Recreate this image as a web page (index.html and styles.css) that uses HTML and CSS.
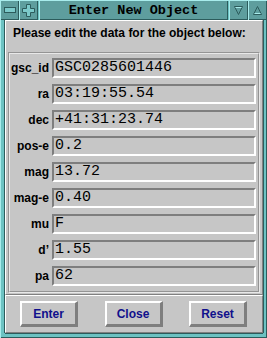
FILE: index.html
```html
<!DOCTYPE html>
<html lang="en">
  <head>
    <meta charset="UTF-8" />
    <title>Enter New Object</title>
    <link rel="stylesheet" href="styles.css">
  </head>
  <body>
    <div class="window">
      <div class="titlebar">
        <div class="tb-btn">
          <svg width="12" height="6" viewBox="0 0 12 6"><rect x="0.5" y="0.5" width="11" height="5" fill="#7ccaca" stroke="#2c5c5c"/></svg>
        </div>
        <div class="tb-btn">
          <svg width="13" height="13" viewBox="0 0 13 13"><path d="M4.5 0.5h4v4h4v4h-4v4h-4v-4h-4v-4h4z" fill="#7ccaca" stroke="#2c5c5c"/></svg>
        </div>
        <div class="tb-title">Enter New Object</div>
        <div class="tb-btn">
          <svg width="9" height="9" viewBox="0 0 9 9"><path d="M0.5 0.5h8l-4 8z" fill="none" stroke="#2c5c5c"/><path d="M1.5 1.5h6" stroke="#a8ecec"/></svg>
        </div>
        <div class="tb-btn">
          <svg width="9" height="9" viewBox="0 0 9 9"><path d="M4.5 0.5l4 8h-8z" fill="none" stroke="#2c5c5c"/><path d="M1.5 7.5h6" stroke="#a8ecec"/></svg>
        </div>
      </div>
      <div class="client">
        <div class="work">
          <p class="prompt">Please edit the data for the object below:</p>
          <div class="form">
            <label class="field-label">gsc_id</label><div class="entry">GSC0285601446</div>
            <label class="field-label">ra</label><div class="entry">03:19:55.54</div>
            <label class="field-label">dec</label><div class="entry">+41:31:23.74</div>
            <label class="field-label">pos-e</label><div class="entry">0.2</div>
            <label class="field-label">mag</label><div class="entry">13.72</div>
            <label class="field-label">mag-e</label><div class="entry">0.40</div>
            <label class="field-label">mu</label><div class="entry">F</div>
            <label class="field-label">d’</label><div class="entry">1.55</div>
            <label class="field-label">pa</label><div class="entry">62</div>
          </div>
        </div>
        <div class="actions">
          <button class="push">Enter</button>
          <button class="push">Close</button>
          <button class="push">Reset</button>
        </div>
      </div>
    </div>
  </body>
</html>
```

FILE: styles.css
```css
* {
  margin: 0;
  padding: 0;
  box-sizing: border-box;
}
body {
  background: #c6c6c6;
  font-family: "Liberation Sans", Arial, sans-serif;
}
.window {
  width: 267px;
  height: 338px;
  display: flex;
  flex-direction: column;
  background: #6cc2c2;
  box-shadow: inset 1px 1px #a8ecec, inset -1px -1px #2c5c5c;
  padding: 0 4px 5px 5px;
}
.titlebar {
  height: 20px;
  display: flex;
  margin: 0 -4px 0 -5px;
}
.tb-btn,
.tb-title {
  background: #5e9e9e;
  box-shadow: inset 1px 1px #a8ecec, inset -1px -1px #2c5c5c;
  display: flex;
  align-items: center;
  justify-content: center;
}
.tb-btn {
  width: 19px;
}
.tb-title {
  flex: 1;
  margin: 0 1px;
  font-family: "Liberation Mono", monospace;
  font-weight: bold;
  font-size: 13.5px;
  color: #000;
}
.client {
  flex: 1;
  display: flex;
  flex-direction: column;
  background: #c6c6c6;
  box-shadow: -1px 0 #2c5c5c, 1px 0 #2c5c5c, 0 1px #2c5c5c;
}
.work {
  border: 1px solid;
  border-color: #fff #808080 #808080 #fff;
  padding: 5px 1px 1px 1px;
}
.prompt {
  font-weight: bold;
  font-size: 12px;
  line-height: 14px;
  padding-left: 6px;
  margin-bottom: 12px;
  color: #000;
}
.form {
  display: grid;
  grid-template-columns: auto 1fr;
  column-gap: 3px;
  row-gap: 6px;
  margin: 0 1px;
  padding: 4px 2px 5px 1px;
  border: 2px groove #e8e8e8;
}
.field-label {
  justify-self: end;
  align-self: center;
  font-weight: bold;
  font-size: 12px;
  color: #000;
}
.entry {
  height: 20px;
  border: 2px solid;
  border-color: #7e7e7e #fff #fff #7e7e7e;
  font-family: "Liberation Mono", monospace;
  font-size: 15px;
  line-height: 16px;
  padding-left: 1px;
  color: #000;
}
.actions {
  flex: 1;
  display: flex;
  justify-content: space-between;
  align-items: center;
  padding: 0 15px 0 14px;
  border: 1px solid;
  border-color: #fff #808080 #808080 #fff;
}
.push {
  width: 58px;
  height: 26px;
  background: #c6c6c6;
  border-style: solid;
  border-width: 2px 3px 3px 2px;
  border-color: #fff #7e7e7e #7e7e7e #fff;
  font-family: "Liberation Sans", Arial, sans-serif;
  font-weight: bold;
  font-size: 12px;
  color: #10108c;
}
```
